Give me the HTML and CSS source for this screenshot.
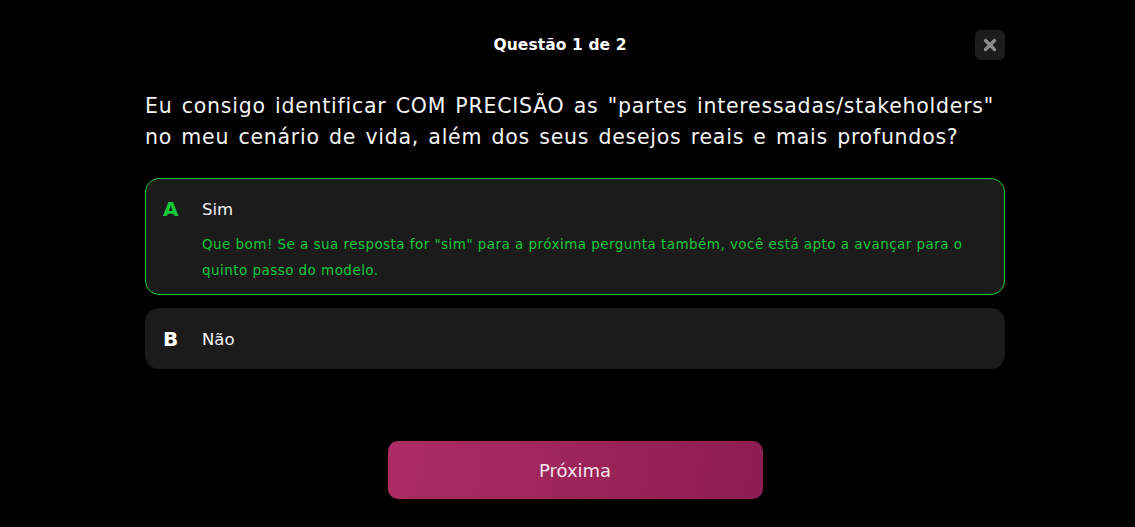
FILE: index.html
```html
<!DOCTYPE html>
<html lang="pt">
<head>
<meta charset="utf-8">
<link rel="stylesheet" href="styles.css">
</head>
<body>
<main class="quiz">
  <header class="quiz-head">
    <h1 class="quiz-title">Questão 1 de 2</h1>
    <button class="close-btn" aria-label="Fechar">
      <svg width="14" height="14" viewBox="0 0 14 14"><path d="M2.5 2.5 L11.5 11.5 M11.5 2.5 L2.5 11.5" stroke="#8a8a8a" stroke-width="3.4" stroke-linecap="round"/></svg>
    </button>
  </header>
  <p class="question">Eu consigo identificar COM PRECISÃO as "partes interessadas/stakeholders" no meu cenário de vida, além dos seus desejos reais e mais profundos?</p>
  <div class="options">
    <div class="option selected">
      <div class="option-row">
        <span class="letter">A</span>
        <span class="answer">Sim</span>
      </div>
      <p class="feedback">Que bom! Se a sua resposta for "sim" para a próxima pergunta também, você está apto a avançar para o quinto passo do modelo.</p>
    </div>
    <div class="option">
      <div class="option-row">
        <span class="letter">B</span>
        <span class="answer">Não</span>
      </div>
    </div>
  </div>
  <div class="actions">
    <button class="next-btn">Próxima</button>
  </div>
</main>
</body>
</html>
```
FILE: styles.css
```css
* { box-sizing: border-box; }
html, body { margin: 0; background: #000; }
body {
  font-family: "DejaVu Sans", "Noto Sans", sans-serif;
  color: #fff;
  width: 1135px;
  height: 527px;
  overflow: hidden;
}
.quiz {
  width: 860px;
  margin-left: 145px;
  padding-top: 30px;
}
.quiz-head {
  display: flex;
  align-items: center;
  height: 30px;
}
.quiz-title {
  flex: 1;
  margin: 0;
  text-align: center;
  font-size: 15.5px;
  font-weight: 700;
  letter-spacing: 0.1px;
}
.close-btn {
  flex: none;
  width: 30px;
  height: 30px;
  border: none;
  border-radius: 6px;
  background: #1c1c1c;
  display: flex;
  align-items: center;
  justify-content: center;
  padding: 0;
}
.question {
  margin: 31px 0 0;
  font-size: 20.5px;
  line-height: 31px;
  letter-spacing: 0.75px;
  word-spacing: 2px;
  color: #f4f4f4;
}
.options {
  margin-top: 25px;
  display: flex;
  flex-direction: column;
  gap: 13px;
}
.option {
  background: #1b1b1b;
  border: 1px solid transparent;
  border-radius: 14px;
  padding: 17px 17px 16px 17px;
}
.option.selected {
  border-color: #14c83c;
  padding-bottom: 11px;
}
.option-row {
  display: flex;
  align-items: center;
  height: 26px;
}
.letter {
  width: 39px;
  font-size: 20px;
  font-weight: 700;
  color: #fff;
}
.selected .letter { color: #14c83c; }
.answer {
  font-size: 16.5px;
  color: #f4f4f4;
}
.feedback {
  margin: 9px 0 0 39px;
  font-size: 13.5px;
  line-height: 26px;
  color: #14c83c;
  letter-spacing: 0.45px;
}
.actions {
  display: flex;
  justify-content: center;
  margin-top: 72px;
}
.next-btn {
  width: 375px;
  height: 58px;
  border: none;
  border-radius: 10px;
  background: linear-gradient(100deg, #ad2c63 0%, #8c1d50 100%);
  color: #f3e3ec;
  font-family: inherit;
  font-size: 18px;
}
```
